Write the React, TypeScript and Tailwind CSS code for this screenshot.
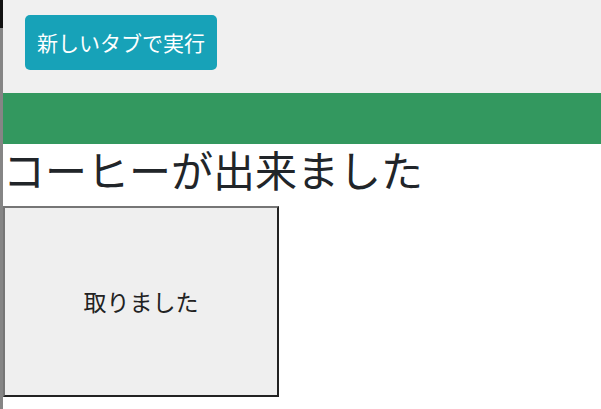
export default function App() {
  return (
    <div className="flex w-[601px] h-[409px] overflow-hidden bg-white font-['Noto_Sans_CJK_JP','Noto_Sans',sans-serif]">
      {/* left edge of the neighbouring pane */}
      <div className="flex w-[3px] shrink-0 flex-col bg-[#858585]">
        <div className="h-[28px] bg-[#111]" />
      </div>

      <main className="flex-1 min-w-0">
        <div className="h-[93px] bg-[#f0f0f0] pl-[22px] pt-[15px]">
          <button className="h-[55px] w-[192px] rounded-[5px] bg-[#17a2b8] text-[21px] leading-none text-white">
            新しいタブで実行
          </button>
        </div>

        <div className="h-[51px] bg-[#33985f]" />

        <h1 className="mb-[12px] whitespace-nowrap text-[42px] leading-[50px] text-[#212529]">
          コーヒーが出来ました
        </h1>

        <button className="flex h-[191px] w-[276px] items-center justify-center border-2 border-t-[#767676] border-l-[#767676] border-r-[#222] border-b-[#222] bg-[#efefef] text-[23px] text-[#222]">
          取りました
        </button>
      </main>
    </div>
  )
}
